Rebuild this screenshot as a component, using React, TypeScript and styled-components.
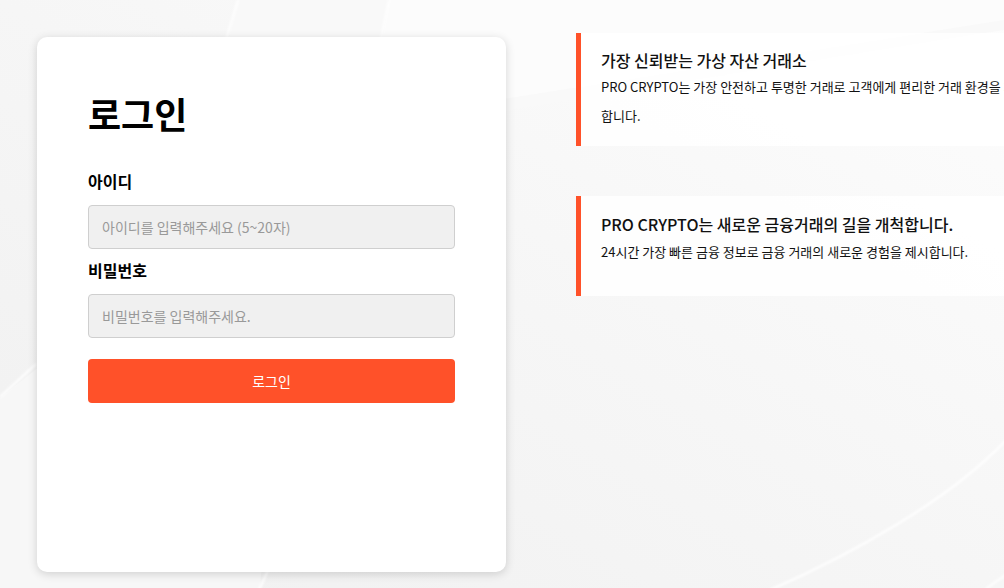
import React from 'react';
import styled, {createGlobalStyle} from "styled-components";

const GlobalStyle = createGlobalStyle`
  html, body {
    margin: 0;
    padding: 0;
    overflow: hidden;
  }
  body {
    font-family: "Noto Sans CJK KR", "Noto Sans", sans-serif;
    color: #111;
  }
`

const ORANGE = '#ff5129'

type InfoItem = {
    title: string
    text: string
    big?: boolean
}

const infos: InfoItem[] = [
    {
        title: '가장 신뢰받는 가상 자산 거래소',
        text: 'PRO CRYPTO는 가장 안전하고 투명한 거래로 고객에게 편리한 거래 환경을 제공합니다.'
    },
    {
        title: 'PRO CRYPTO는 새로운 금융거래의 길을 개척합니다.',
        text: '24시간 가장 빠른 금융 정보로 금융 거래의 새로운 경험을 제시합니다.',
        big: true
    }
]

const Backdrop = () => (
    <BgSvg viewBox="0 0 1004 588" preserveAspectRatio="none">
        <defs>
            <linearGradient id="base" x1="0" y1="1" x2="1" y2="0">
                <stop offset="0" stopColor="#f0f0f0"/>
                <stop offset="0.5" stopColor="#f6f6f6"/>
                <stop offset="1" stopColor="#fdfdfd"/>
            </linearGradient>
            <filter id="soft">
                <feGaussianBlur stdDeviation="0.8"/>
            </filter>
        </defs>
        <rect width="1004" height="588" fill="url(#base)"/>
        {/* light slanted bands at the top */}
        <polygon points="238,0 1004,0 1004,30 200,160" fill="#f9f9f9"/>
        <polygon points="389,0 1004,0 1004,20 370,120" fill="#fcfcfc"/>
        {/* lighter lower left area */}
        <polygon points="0,398 60,350 280,330 260,588 0,588" fill="#f7f7f7"/>
        <g filter="url(#soft)" stroke="#ffffff" fill="none" strokeWidth="2">
            <path d="M238 0 L226 40"/>
            <path d="M389 0 L381 40"/>
            <path d="M0 397 L36 364"/>
            <path d="M259 590 L270 566"/>
            <path d="M770 590 C 850 555, 950 500, 1006 440"/>
            <path d="M985 590 C 992 584, 998 580, 1006 575"/>
        </g>
    </BgSvg>
)

const App = () => {
    return (
        <Page>
            <GlobalStyle/>
            <Backdrop/>
            <Card>
                <Title>로그인</Title>
                <Label htmlFor="user-id">아이디</Label>
                <Input id="user-id" type="text" placeholder="아이디를 입력해주세요 (5~20자)"/>
                <Label htmlFor="user-pw">비밀번호</Label>
                <Input id="user-pw" type="password" placeholder="비밀번호를 입력해주세요."/>
                <LoginButton type="button">로그인</LoginButton>
            </Card>

            <InfoColumn>
                {infos.map((info, i) => (
                    <InfoBox key={i}>
                        <InfoTitle big={info.big}>{info.title}</InfoTitle>
                        <InfoText>{info.text}</InfoText>
                    </InfoBox>
                ))}
            </InfoColumn>
        </Page>
    );
};

export default App;

const Page = styled.div`
  position: relative;
  display: flex;
  align-items: flex-start;
  width: 1004px;
  height: 588px;
  box-sizing: border-box;
  padding: 33px 0 0 37px;
  overflow: hidden;
`
const BgSvg = styled.svg`
  position: absolute;
  left: 0;
  top: 0;
  width: 100%;
  height: 100%;
  z-index: 0;
`
const Card = styled.div`
  position: relative;
  z-index: 1;
  display: flex;
  flex-direction: column;
  flex-shrink: 0;
  box-sizing: border-box;
  width: 469px;
  height: 535px;
  margin-top: 4px;
  padding: 54px 51px 0;
  background: #fff;
  border-radius: 10px;
  box-shadow: 0 2px 10px rgba(0, 0, 0, 0.16);
`
const Title = styled.h1`
  margin: 0 0 34px;
  font-size: 36px;
  line-height: 44px;
  font-weight: 700;
  color: #000;
`
const Label = styled.label`
  display: block;
  margin-bottom: 12px;
  font-size: 16px;
  line-height: 24px;
  font-weight: 700;
  color: #000;
`
const Input = styled.input`
  box-sizing: border-box;
  width: 100%;
  height: 44px;
  margin: 0 0 9px;
  padding: 0 13px;
  font-family: inherit;
  font-size: 14px;
  background: #f0f0f0;
  border: 1px solid #cfcfcf;
  border-radius: 4px;
  outline: none;

  &::placeholder {
    color: #999;
  }
`
const LoginButton = styled.button`
  height: 44px;
  margin-top: 12px;
  border: none;
  border-radius: 4px;
  background: ${ORANGE};
  color: #fff;
  font-family: inherit;
  font-size: 14px;
  cursor: pointer;
`
const InfoColumn = styled.div`
  position: relative;
  z-index: 1;
  display: flex;
  flex-direction: column;
  gap: 50px;
  flex-shrink: 0;
  margin-left: 70px;
`
const InfoBox = styled.div`
  box-sizing: border-box;
  width: 482px;
  min-height: 100px;
  padding: 15px 20px 16px 20px;
  border-left: 5px solid ${ORANGE};
  background: rgba(255, 255, 255, 0.85);
`
const InfoTitle = styled.h3<{ big?: boolean }>`
  margin: 0;
  font-size: 16px;
  line-height: ${({big}) => big ? '26px' : '24px'};
  font-weight: 500;
  color: #111;
`
const InfoText = styled.p`
  margin: 0;
  font-size: 13px;
  line-height: 29px;
  color: #111;
`
